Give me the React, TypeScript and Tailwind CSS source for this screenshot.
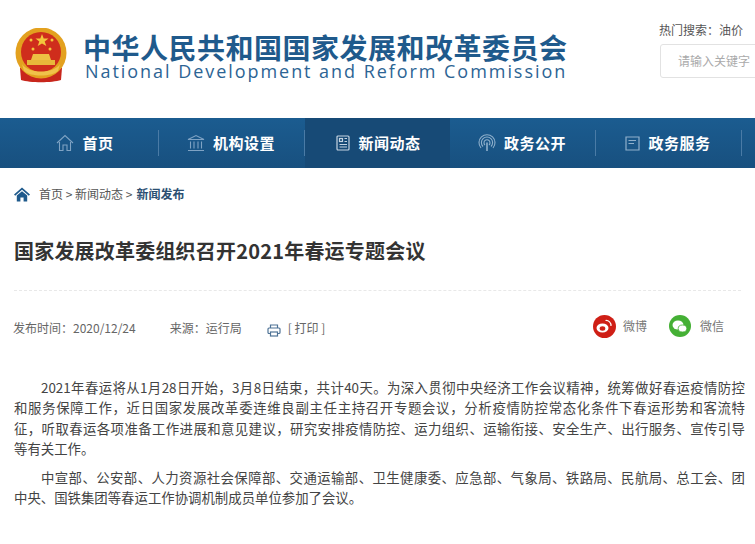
const cjk = { fontFamily: '"Noto Sans CJK SC", "Liberation Sans", sans-serif' };

function Emblem() {
  return (
    <svg width="54" height="56" viewBox="0 0 54 56" className="shrink-0">
      <path d="M6 40 C12 36 42 36 48 40 L47 52 C38 55 16 55 7 52 Z" fill="#c8261c" />
      <circle cx="27" cy="25" r="25.5" fill="#e3a11f" />
      <circle cx="27" cy="24" r="20" fill="#cf2d1c" />
      <path d="M28 6 l1.7 4.5 4.8 0 -3.8 3 1.6 4.6 -4.3 -2.7 -4.3 2.7 1.6 -4.6 -3.8 -3 4.8 0z" fill="#f3c63c" />
      <circle cx="17" cy="12" r="1.5" fill="#f3c63c" />
      <circle cx="38" cy="12" r="1.5" fill="#f3c63c" />
      <circle cx="19" cy="21" r="1.5" fill="#f3c63c" />
      <circle cx="36" cy="21" r="1.5" fill="#f3c63c" />
      <path d="M17 32 L19 26 H35 L37 32 Z" fill="#edc043" />
      <path d="M13 37 H41 V32 H13 Z" fill="#e8b73a" />
      <path d="M8 36 C14 46 40 46 46 36 L44 43 C38 49 16 49 10 43 Z" fill="#f0c24a" />
    </svg>
  );
}

function HomeIcon() {
  return (
    <svg width="18" height="18" viewBox="0 0 18 18" fill="none" stroke="#7fa3c4" strokeWidth="1.1">
      <path d="M1 9 L9 1.5 L17 9" />
      <path d="M3.5 8 V16.5 H7 V11 H11 V16.5 H14.5 V8" />
    </svg>
  );
}
function BankIcon() {
  return (
    <svg width="18" height="18" viewBox="0 0 18 18" fill="none" stroke="#7fa3c4" strokeWidth="1.1">
      <path d="M1 5.5 L9 1.5 L17 5.5 Z" />
      <path d="M3.5 7.5 V14.5 M7 7.5 V14.5 M11 7.5 V14.5 M14.5 7.5 V14.5 M1 16.5 H17" />
    </svg>
  );
}
function NewsIcon() {
  return (
    <svg width="14" height="16" viewBox="0 0 14 16" fill="none" stroke="#c5d4e2" strokeWidth="1.2">
      <rect x="1" y="1" width="12" height="14" rx="1" />
      <rect x="3.5" y="3.5" width="3" height="3" />
      <path d="M8.5 3.5 H11 M8.5 6.5 H11 M3.5 9.5 H11 M3.5 12 H11" />
    </svg>
  );
}
function SignalIcon() {
  return (
    <svg width="18" height="18" viewBox="0 0 18 18" fill="none" stroke="#8fb0cc" strokeWidth="1.1">
      <path d="M3 14 A8 8 0 1 1 15 14" />
      <path d="M5 12.5 A5.6 5.6 0 1 1 13 12.5" />
      <path d="M7 11 A3 3 0 1 1 11 11" />
      <path d="M9 8.5 V17" strokeWidth="1.6" />
    </svg>
  );
}
function BookIcon() {
  return (
    <svg width="15" height="16" viewBox="0 0 15 16" fill="none" stroke="#8fb0cc" strokeWidth="1.2">
      <path d="M1 2 H14 V15 H1 Z" />
      <path d="M3.5 5.5 H11 M3.5 8.5 H9" />
    </svg>
  );
}

const navItems = [
  { label: '首页', icon: <HomeIcon />, active: false },
  { label: '机构设置', icon: <BankIcon />, active: false },
  { label: '新闻动态', icon: <NewsIcon />, active: true },
  { label: '政务公开', icon: <SignalIcon />, active: false },
  { label: '政务服务', icon: <BookIcon />, active: false },
];

const lineClass = 'whitespace-nowrap text-justify [text-align-last:justify]';

export default function App() {
  return (
    <div className="relative w-[755px] h-[544px] overflow-hidden bg-white" style={cjk}>
      <header className="flex h-[118px] pl-[14px]">
        <div className="mt-[28px]"><Emblem /></div>
        <div className="ml-[15px] mt-[33px] w-[490px] shrink-0">
          <div className="text-[28px] leading-[28px] font-bold text-[#1f5a8c] tracking-[0.5px] whitespace-nowrap">中华人民共和国国家发展和改革委员会</div>
          <div className="ml-[2px] text-[18px] leading-[20px] text-[#2c6494] tracking-[1.95px] whitespace-nowrap" style={{ fontFamily: '"Open Sans", sans-serif' }}>National Development and Reform Commission</div>
        </div>
        <div className="ml-[86px] mt-[21px] shrink-0">
          <div className="text-[12px] leading-[18px] text-[#555]">热门搜索：油价</div>
          <div className="mt-[5px] ml-px w-[120px] h-[34px] border border-[#e2e2e2] rounded-[3px] pl-[17px] text-[12px] leading-[32px] text-[#aaa]">请输入关键字</div>
        </div>
      </header>

      <nav className="flex h-[50px] pl-[13px] bg-gradient-to-b from-[#1b5c90] to-[#18507f]">
        {navItems.map((it) => (
          <div key={it.label} className={`relative shrink-0 flex items-center justify-center gap-[8px] ${it.active ? 'w-[145px] pl-[2px] bg-[#174a76]' : 'w-[146px] pr-[2px]'}`}>
            {it.icon}
            <span className="text-[15px] tracking-[0.5px] font-bold text-white whitespace-nowrap">{it.label}</span>
            {!it.active && <span className="absolute right-0 top-[12px] h-[26px] w-px bg-[#4a7ba6]" />}
          </div>
        ))}
      </nav>

      <div className="flex items-center h-[20px] mt-[16px] pl-[14px] text-[12px] text-[#555]">
        <svg width="16" height="15" viewBox="0 0 16 15" fill="#1f5a8c">
          <path d="M8 0.5 L16 7.5 L14.8 8.8 L8 2.8 L1.2 8.8 L0 7.5 Z" />
          <path d="M2.8 8.6 L8 4.2 L13.2 8.6 V14.5 H9.6 V10.5 H6.4 V14.5 H2.8 Z" />
        </svg>
        <span className="ml-[9px]">首页 &gt; 新闻动态 &gt; </span>
        <span className="ml-[4px] font-bold text-[#2c4f72]">新闻发布</span>
      </div>

      <h1 className="mt-[27px] pl-[14px] text-[20px] leading-[40px] font-bold text-[#333] tracking-[0.2px]">国家发展改革委组织召开2021年春运专题会议</h1>

      <div className="mt-[19px] mx-[14px] border-t border-dashed border-[#e8e8e8]" />

      <div className="flex items-center h-[30px] mt-[22px] pl-[13px] pr-[31px] text-[12px] text-[#666]">
        <span>发布时间：2020/12/24</span>
        <span className="ml-[34px]">来源：运行局</span>
        <svg className="ml-[25px] mt-[4px]" width="14" height="13" viewBox="0 0 14 13" fill="none" stroke="#4f7396" strokeWidth="1.2">
          <path d="M3.5 4 V1 H10.5 V4" />
          <rect x="1" y="4" width="12" height="5.5" rx="1" />
          <rect x="3.5" y="8" width="7" height="4" fill="#fff" />
        </svg>
        <span className="ml-[7px]">[ 打印 ]</span>
        <div className="ml-auto flex items-center mt-[-4px]">
          <span className="w-[23px] h-[23px] rounded-full bg-[#cf1f16] flex items-center justify-center">
            <svg width="16" height="14" viewBox="0 0 16 14">
              <ellipse cx="6.5" cy="9" rx="6" ry="4.5" fill="#fff" />
              <ellipse cx="6.5" cy="9.5" rx="2.8" ry="2.2" fill="#cf1f16" />
              <path d="M9.5 1.5 A5 5 0 0 1 15 7" fill="none" stroke="#fff" strokeWidth="1.2" />
            </svg>
          </span>
          <span className="ml-[7px] text-[#777]">微博</span>
          <span className="ml-[22px] w-[22px] h-[22px] rounded-full bg-[#45b035] flex items-center justify-center">
            <svg width="15" height="13" viewBox="0 0 15 13" fill="#fff">
              <ellipse cx="6" cy="5" rx="5.5" ry="4.5" />
              <ellipse cx="10.5" cy="8.5" rx="4.3" ry="3.5" stroke="#45b035" strokeWidth="0.8" />
            </svg>
          </span>
          <span className="ml-[9px] text-[#777]">微信</span>
        </div>
      </div>

      <div className="mt-[34px] pl-[14px] pr-[10px] text-[13.4px] leading-[20.4px] text-[#444]">
        <div className={`${lineClass} indent-[27px]`}>2021年春运将从1月28日开始，3月8日结束，共计40天。为深入贯彻中央经济工作会议精神，统筹做好春运疫情防控</div>
        <div className={lineClass}>和服务保障工作，近日国家发展改革委连维良副主任主持召开专题会议，分析疫情防控常态化条件下春运形势和客流特</div>
        <div className={lineClass}>征，听取春运各项准备工作进展和意见建议，研究安排疫情防控、运力组织、运输衔接、安全生产、出行服务、宣传引导</div>
        <div>等有关工作。</div>
        <div className={`${lineClass} indent-[27px] mt-[8px]`}>中宣部、公安部、人力资源社会保障部、交通运输部、卫生健康委、应急部、气象局、铁路局、民航局、总工会、团</div>
        <div>中央、国铁集团等春运工作协调机制成员单位参加了会议。</div>
      </div>
    </div>
  );
}
